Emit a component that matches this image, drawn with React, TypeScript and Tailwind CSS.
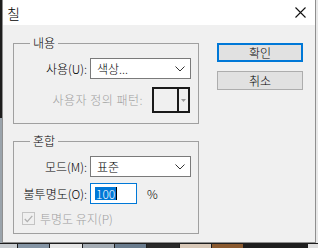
import React from 'react';

const font = { fontFamily: '"Noto Sans CJK KR", "Noto Sans", sans-serif' };

// desktop colour strip peeking out below the dialog
const swatches = [
  'w-[17px] bg-[#c9cdd1]',
  'w-[31px] bg-[#8595a5]',
  'w-[32px] bg-[#e6e6e6]',
  'w-[31px] bg-[#a5adb5]',
  'w-[31px] bg-[#6a7c8e]',
  'w-[32px] bg-[#2a2a2a]',
  'w-[31px] bg-[#d8c8b8]',
  'w-[31px] bg-[#8a5a30]',
  'w-[31px] bg-[#1e1e1e]',
  'w-[31px] bg-[#1e1e1e]',
  'flex-1 bg-[#e0e0e0]',
];

function Chevron() {
  return (
    <svg width="10" height="6" viewBox="0 0 10 6" className="text-[#333]">
      <path d="M0.5 0.5 L5 5 L9.5 0.5" fill="none" stroke="currentColor" strokeWidth="1" />
    </svg>
  );
}

function Select({ value }: { value: string }) {
  return (
    <div className="flex h-[21px] w-[101px] items-center justify-between border border-[#7a7a7a] bg-white pl-[6px] pr-[5px] text-[12px] leading-none text-black">
      <span>{value}</span>
      <Chevron />
    </div>
  );
}

function Group({ title, children }: { title: string; children: React.ReactNode }) {
  return (
    <div className="relative border border-[#a0a0a0] pt-[14px]">
      <span className="absolute -top-[9px] left-[16px] bg-[#f0f0f0] px-[3px] text-[12px] leading-[16px] text-black">
        {title}
      </span>
      {children}
    </div>
  );
}

function Label({ children }: { children: React.ReactNode }) {
  return <span className="w-[73px] shrink-0 text-right text-[12px] leading-none text-black">{children}</span>;
}

export default function App() {
  return (
    <div className="flex h-[248px] w-[318px] flex-col overflow-hidden bg-[#1e1e1e] font-light" style={font}>
      <div className="flex h-[243px]">
        <div className="flex w-[2px] flex-col">
          <div className="h-[118px] bg-[#1e1e1e]" />
          <div className="flex-1 bg-[#9aa3ab]" />
        </div>

        <div className="flex w-[314px] flex-col border-x border-b border-[#8f8f8f] bg-[#f0f0f0]">
          {/* title bar */}
          <div className="flex h-[25px] items-center justify-between bg-white pl-[4px] pr-[9px]">
            <span className="text-[14px] leading-none text-black">칠</span>
            <svg width="11" height="11" viewBox="0 0 11 11">
              <path d="M0.5 0.5 L10.5 10.5 M10.5 0.5 L0.5 10.5" stroke="#111" strokeWidth="1.1" />
            </svg>
          </div>

          <div className="flex gap-[18px] pl-[10px] pt-[18px]">
            {/* left column */}
            <div className="flex w-[186px] flex-col">
              <Group title="내용">
                <div className="flex h-[21px] items-center gap-[3px]">
                  <Label>사용(U):</Label>
                  <Select value="색상..." />
                </div>
                <div className="mt-[8px] flex items-center justify-end gap-[9px] pb-[10px] pr-[8px]">
                  <span className="text-[12px] leading-none tracking-[0.5px] text-[#a0a0a0]">사용자 정의 패턴:</span>
                  <div className="flex h-[26px] w-[38px] border-2 border-[#1a1a1a] bg-[#f0f0f0]">
                    <div className="w-[25px] border-r-2 border-[#1a1a1a]" />
                    <div className="flex flex-1 items-center justify-center">
                      <svg width="5" height="3" viewBox="0 0 5 3">
                        <path d="M0 0 L5 0 L2.5 3 Z" fill="#9a9a9a" />
                      </svg>
                    </div>
                  </div>
                </div>
              </Group>

              <div className="mt-[17px]">
                <Group title="혼합">
                  <div className="flex h-[21px] items-center gap-[3px]">
                    <Label>모드(M):</Label>
                    <Select value="표준" />
                  </div>
                  <div className="mt-[6px] flex h-[21px] items-center gap-[3px]">
                    <Label>불투명도(O):</Label>
                    <div className="flex h-[21px] w-[47px] items-center border border-[#0078d7] bg-white pl-[4px]">
                      <span className="flex h-[13px] items-center bg-[#0078d7] px-px text-[12px] leading-none text-white">
                        100
                      </span>
                      <span className="h-[13px] w-px bg-black" />
                    </div>
                    <span className="ml-[7px] text-[12px] leading-none text-black">%</span>
                  </div>
                  <div className="mt-[8px] flex h-[13px] items-center gap-[5px] pb-0 pl-[8px]">
                    <div className="flex h-[13px] w-[13px] items-center justify-center border border-[#c4c4c4] bg-[#f0f0f0]">
                      <svg width="9" height="8" viewBox="0 0 9 8">
                        <path d="M0.8 4 L3.3 6.6 L8.3 0.8" fill="none" stroke="#b0b0b0" strokeWidth="1.3" />
                      </svg>
                    </div>
                    <span className="text-[12px] leading-none text-[#a0a0a0]">투명도 유지(P)</span>
                  </div>
                  <div className="h-[8px]" />
                </Group>
              </div>
            </div>

            {/* buttons */}
            <div className="flex w-[86px] flex-col gap-[9px]">
              <button className="flex h-[19px] items-center justify-center border-2 border-[#0078d7] bg-[#e1e1e1] text-[12px] leading-none text-black">
                확인
              </button>
              <button className="flex h-[19px] items-center justify-center border border-[#adadad] bg-[#e1e1e1] text-[12px] leading-none text-black">
                취소
              </button>
            </div>
          </div>
        </div>

        <div className="flex-1 bg-[#e8e8e8]" />
      </div>

      <div className="mt-px flex flex-1 gap-px">
        {swatches.map((c, i) => (
          <div key={i} className={c} />
        ))}
      </div>
    </div>
  );
}
